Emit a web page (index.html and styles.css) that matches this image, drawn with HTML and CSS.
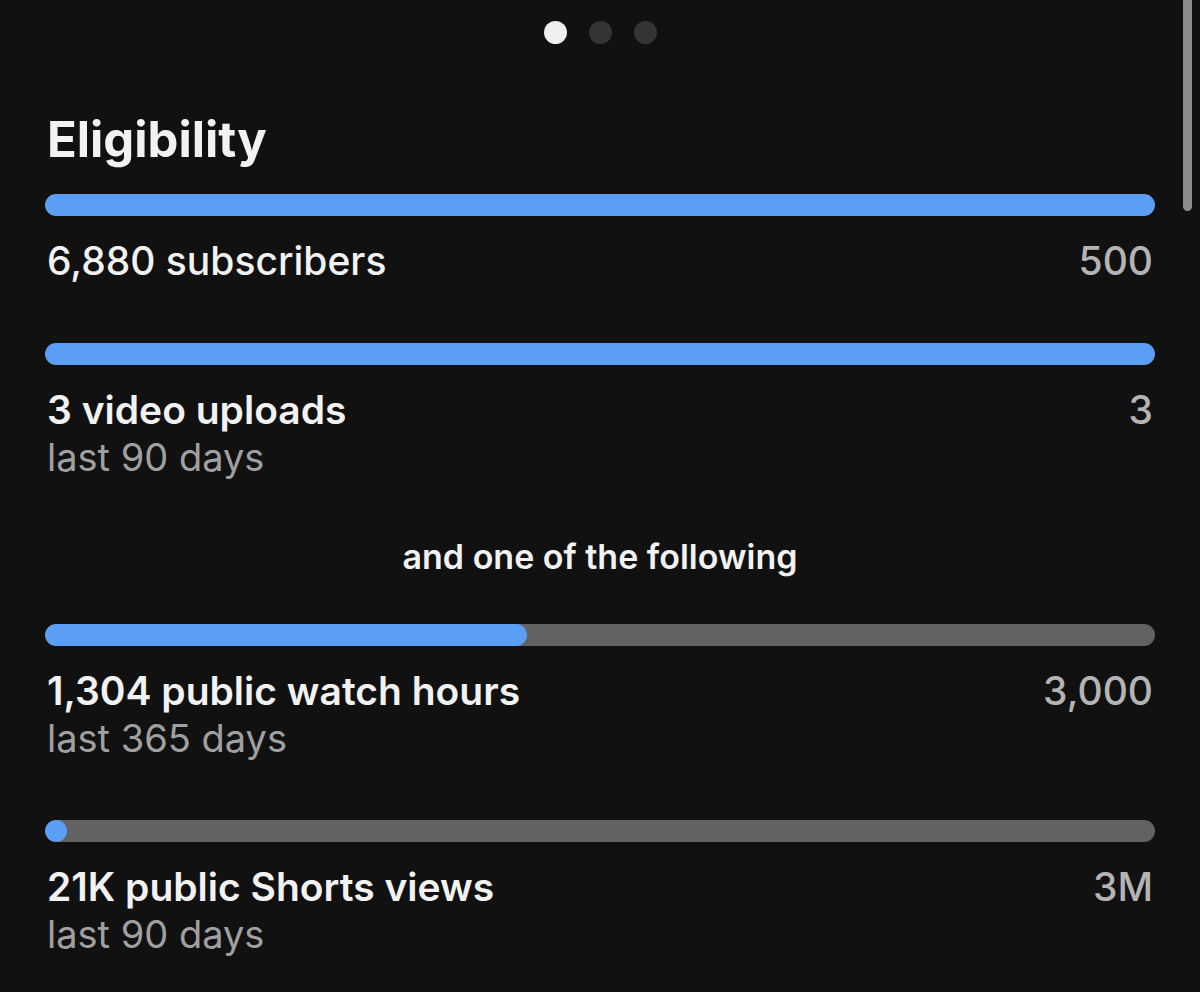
FILE: index.html
```html
<!DOCTYPE html>
<html lang="en">
<head>
<meta charset="utf-8">
<title>Eligibility</title>
<link rel="stylesheet" href="styles.css">
</head>
<body>
<div class="screen">
  <div class="pager">
    <span class="dot dot-active"></span>
    <span class="dot"></span>
    <span class="dot"></span>
  </div>
  <main class="content">
    <h1 class="title">Eligibility</h1>

    <section class="req">
      <div class="bar"><div class="fill" style="width:100%"></div></div>
      <div class="req-row">
        <div class="req-text">
          <div class="req-label req-label-medium">6,880 subscribers</div>
        </div>
        <div class="req-target">500</div>
      </div>
    </section>

    <section class="req">
      <div class="bar"><div class="fill" style="width:100%"></div></div>
      <div class="req-row">
        <div class="req-text">
          <div class="req-label">3 video uploads</div>
          <div class="req-sub">last 90 days</div>
        </div>
        <div class="req-target">3</div>
      </div>
    </section>

    <p class="divider-text">and one of the following</p>

    <section class="req">
      <div class="bar"><div class="fill" style="width:43.4%"></div></div>
      <div class="req-row">
        <div class="req-text">
          <div class="req-label">1,304 public watch hours</div>
          <div class="req-sub">last 365 days</div>
        </div>
        <div class="req-target">3,000</div>
      </div>
    </section>

    <section class="req">
      <div class="bar"><div class="fill" style="width:0.7%"></div></div>
      <div class="req-row">
        <div class="req-text">
          <div class="req-label">21K public Shorts views</div>
          <div class="req-sub">last 90 days</div>
        </div>
        <div class="req-target">3M</div>
      </div>
    </section>
  </main>
  <div class="scrollbar"></div>
</div>
</body>
</html>
```

FILE: styles.css
```css
* { box-sizing: border-box; }

html, body {
  margin: 0;
  padding: 0;
  background: #111111;
}

body {
  font-family: Inter, "Noto Sans", "Liberation Sans", sans-serif;
  color: #f2f2f2;
}

.screen {
  position: relative;
  width: 1200px;
  height: 992px;
  overflow: hidden;
  background: #111111;
}

.pager {
  display: flex;
  justify-content: center;
  gap: 22px;
  padding-top: 21px;
}

.dot {
  width: 23px;
  height: 23px;
  border-radius: 50%;
  background: #343434;
}

.dot-active {
  background: #f0f0f0;
}

.content {
  padding: 0 45px;
}

.title {
  margin: 66px 0 24px 2px;
  font-size: 49px;
  line-height: 60px;
  font-weight: 700;
  color: #f2f2f2;
}

.req {
  margin-bottom: 60px;
}

.bar {
  height: 22px;
  border-radius: 11px;
  background: #626262;
  overflow: hidden;
}

.fill {
  height: 100%;
  min-width: 22px;
  border-radius: 11px;
  background: #5a9ff5;
}

.req-row {
  display: flex;
  justify-content: space-between;
  align-items: flex-start;
  margin-top: 23px;
  padding: 0 2px;
}

.req-label {
  font-size: 39px;
  line-height: 44px;
  font-weight: 600;
  color: #f2f2f2;
}

.req-label-medium {
  font-weight: 500;
}

.req-sub {
  margin-top: 4px;
  font-size: 38px;
  line-height: 43px;
  font-weight: 400;
  color: #a0a0a0;
}

.req-target {
  font-size: 39px;
  line-height: 44px;
  font-weight: 500;
  color: #b4b4b4;
}

.divider-text {
  margin: 0 0 49px;
  text-align: center;
  font-size: 34px;
  line-height: 36px;
  font-weight: 600;
  color: #f2f2f2;
}

.scrollbar {
  position: absolute;
  top: 0;
  left: 1183px;
  width: 9px;
  height: 211px;
  border-radius: 0 0 5px 5px;
  background: #8c8c8c;
}
```
